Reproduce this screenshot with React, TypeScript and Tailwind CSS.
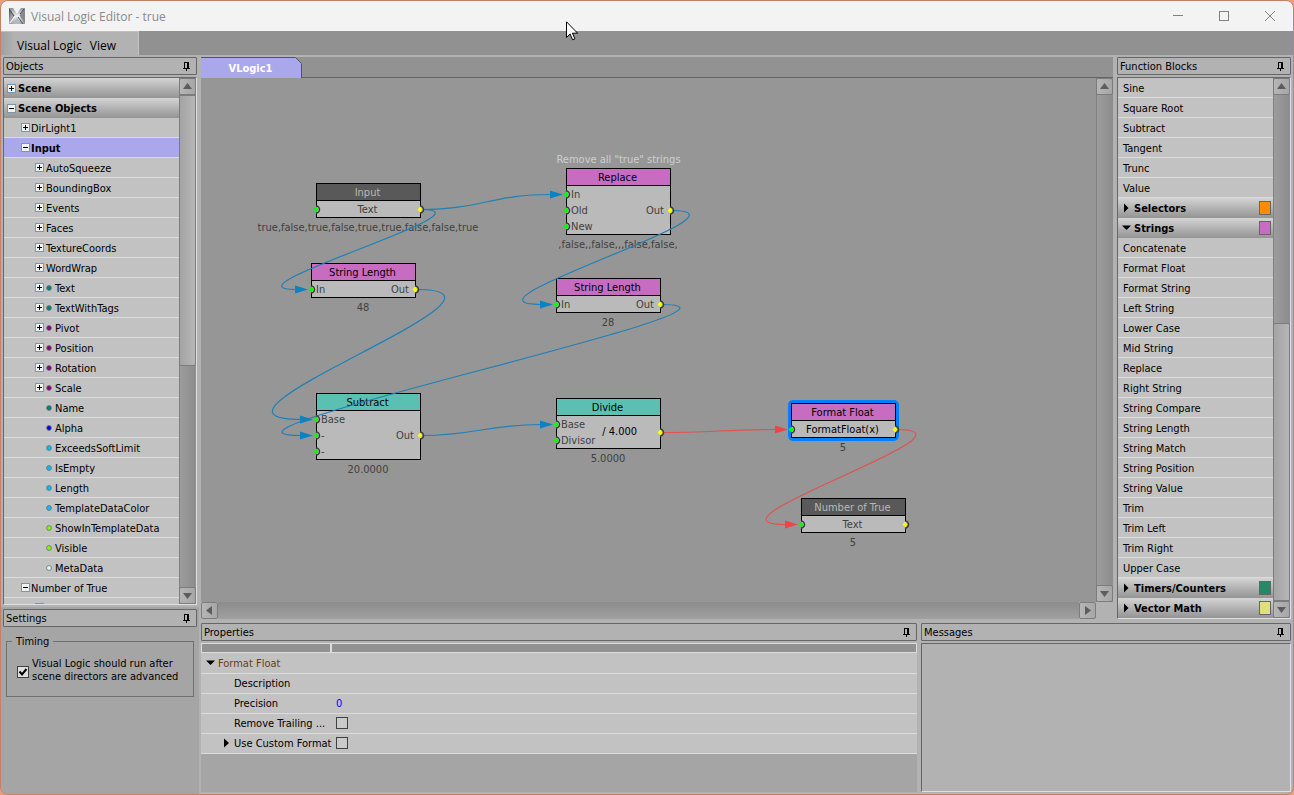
import { useState } from "react";
import type { ReactNode } from "react";

type TreeRow = {
  label: string;
  level: number;
  toggle?: "+" | "-";
  dot?: string;
};

const treeRows: TreeRow[] = [
  { label: "DirLight1", level: 1, toggle: "+" },
  { label: "Input", level: 1, toggle: "-" },
  { label: "AutoSqueeze", level: 2, toggle: "+" },
  { label: "BoundingBox", level: 2, toggle: "+" },
  { label: "Events", level: 2, toggle: "+" },
  { label: "Faces", level: 2, toggle: "+" },
  { label: "TextureCoords", level: 2, toggle: "+" },
  { label: "WordWrap", level: 2, toggle: "+" },
  { label: "Text", level: 2, toggle: "+", dot: "#008080" },
  { label: "TextWithTags", level: 2, toggle: "+", dot: "#008080" },
  { label: "Pivot", level: 2, toggle: "+", dot: "#800080" },
  { label: "Position", level: 2, toggle: "+", dot: "#800080" },
  { label: "Rotation", level: 2, toggle: "+", dot: "#800080" },
  { label: "Scale", level: 2, toggle: "+", dot: "#800080" },
  { label: "Name", level: 2, dot: "#008080" },
  { label: "Alpha", level: 2, dot: "#0000ff" },
  { label: "ExceedsSoftLimit", level: 2, dot: "#00bfff" },
  { label: "IsEmpty", level: 2, dot: "#00bfff" },
  { label: "Length", level: 2, dot: "#00bfff" },
  { label: "TemplateDataColor", level: 2, dot: "#00bfff" },
  { label: "ShowInTemplateData", level: 2, dot: "#7fff00" },
  { label: "Visible", level: 2, dot: "#7fff00" },
  { label: "MetaData", level: 2, dot: "#e0ffff" },
  { label: "Number of True", level: 1, toggle: "-" },
  { label: "", level: 2, toggle: "+" },
];

const mathBlocks = ["Sine", "Square Root", "Subtract", "Tangent", "Trunc", "Value"];

const stringBlocks = [
  "Concatenate",
  "Format Float",
  "Format String",
  "Left String",
  "Lower Case",
  "Mid String",
  "Replace",
  "Right String",
  "String Compare",
  "String Length",
  "String Match",
  "String Position",
  "String Value",
  "Trim",
  "Trim Left",
  "Trim Right",
  "Upper Case",
];

type GraphNode = {
  x: number;
  y: number;
  title: string;
  kind: "object" | "string" | "math";
  inputs: string[];
  output?: string;
  middle?: string;
  value: string;
  note?: string;
  selected?: boolean;
};

const nodes: GraphNode[] = [
  { x: 115, y: 105, title: "Input", kind: "object", inputs: [""], middle: "Text", value: "true,false,true,false,true,true,false,false,true" },
  { x: 365, y: 90, title: "Replace", kind: "string", inputs: ["In", "Old", "New"], output: "Out", value: ",false,,false,,,false,false,", note: 'Remove all "true" strings' },
  { x: 110, y: 185, title: "String Length", kind: "string", inputs: ["In"], output: "Out", value: "48" },
  { x: 355, y: 200, title: "String Length", kind: "string", inputs: ["In"], output: "Out", value: "28" },
  { x: 115, y: 315, title: "Subtract", kind: "math", inputs: ["Base", "-", "-"], output: "Out", value: "20.0000" },
  { x: 355, y: 320, title: "Divide", kind: "math", inputs: ["Base", "Divisor"], middle: "/ 4.000", value: "5.0000" },
  { x: 590, y: 325, title: "Format Float", kind: "string", inputs: [""], middle: "FormatFloat(x)", value: "5", selected: true },
  { x: 600, y: 420, title: "Number of True", kind: "object", inputs: [""], middle: "Text", value: "5" },
];

const headerStyles = {
  object: "bg-[#595959] text-[#b8b8b8]",
  string: "bg-[#c86cc2] text-black",
  math: "bg-[#5bbfb1] text-black",
};

// from, to (arrow tail) and how far the curve is pulled sideways at both ends
const wires = [
  { from: [220, 131], to: [350, 116], pull: 60, red: false },
  { from: [220, 131], to: [95, 211], pull: 80, red: false },
  { from: [215, 211], to: [100, 341], pull: 133, red: false },
  { from: [470, 132], to: [340, 226], pull: 97, red: false },
  { from: [460, 226], to: [100, 357], pull: 134, red: false },
  { from: [220, 357], to: [340, 346], pull: 55, red: false },
  { from: [460, 354], to: [575, 351], pull: 50, red: true },
  { from: [695, 351], to: [585, 446], pull: 99, red: true },
];

function Pin() {
  return (
    <svg className="block" width="7" height="9" viewBox="0 0 7 9" shapeRendering="crispEdges">
      <path d="M1 0h5v1H1zM1 0h1v6H1zM4 0h2v6H4zM0 6h7v1H0zM3 7h1v2H3z" fill="#000" />
    </svg>
  );
}

function PanelHeader({ title }: { title: string }) {
  return (
    <header className="flex h-[18px] shrink-0 items-center justify-between rounded-[1px] border border-[#666] bg-[#b2b2b2] pr-[6px] pl-[2px]">
      <h2>{title}</h2>
      <button aria-label={`Pin ${title}`}>
        <Pin />
      </button>
    </header>
  );
}

function ScrollButton({ dir }: { dir: "up" | "down" | "left" | "right" }) {
  const paths = {
    up: "M3 10L7.500 4L12 10z",
    down: "M3 5L7.500 11L12 5z",
    left: "M10 3L4 7.500L10 12z",
    right: "M5 3L11 7.500L5 12z",
  };
  return (
    <button
      aria-label={`Scroll ${dir}`}
      className="h-[17px] w-[17px] shrink-0 rounded-[2px] border border-[#7c7c7c] bg-linear-to-r from-[#b6b6b6] to-[#a6a6a6]"
    >
      <svg className="block" width="15" height="15" viewBox="0 0 15 15">
        <path d={paths[dir]} fill="#5c5c5c" />
      </svg>
    </button>
  );
}

function VerticalScroll({ children }: { children?: ReactNode }) {
  return (
    <div className="flex w-[17px] shrink-0 flex-col border-l border-[#808080] bg-linear-to-r from-[#9c9c9c] to-[#8c8c8c]">
      <div className="-ml-px flex min-h-0 flex-1 flex-col">
        <ScrollButton dir="up" />
        <div className="flex min-h-0 flex-1 flex-col">{children}</div>
        <ScrollButton dir="down" />
      </div>
    </div>
  );
}

function Toggle({ sign }: { sign: "+" | "-" }) {
  return (
    <button aria-label={sign === "+" ? "Expand" : "Collapse"} className="shrink-0">
      <svg className="block" width="9" height="9" viewBox="0 0 9 9" shapeRendering="crispEdges">
        <rect x="0.5" y="0.5" width="8" height="8" fill="#f1f1ee" stroke="#7b95ad" />
        <path d="M2 4h5v1H2z" fill="#000" />
        {sign === "+" && <path d="M4 2h1v5H4z" fill="#000" />}
      </svg>
    </button>
  );
}

function ObjectTree() {
  const [selected, setSelected] = useState("Input");
  return (
    <ul className="min-h-0 min-w-0 flex-1 overflow-hidden bg-[#c2c2c2]">
      {[
        { label: "Scene", toggle: "+" as const },
        { label: "Scene Objects", toggle: "-" as const },
      ].map((row) => (
        <li
          key={row.label}
          className="flex h-5 items-center gap-[2px] bg-linear-to-b from-[#d4d4d4] to-[#949494] pl-[3px] font-bold"
        >
          <Toggle sign={row.toggle} />
          {row.label}
        </li>
      ))}
      {treeRows.map((row, i) => (
        <li
          key={i}
          onClick={() => setSelected(row.label)}
          className={`flex h-5 items-center border-b border-[#dcdcdc] ${
            row.level === 1 ? "gap-px pl-[17px]" : "gap-[2px] pl-[31px]"
          } ${row.label === selected ? "bg-[#aaa8ea] font-bold" : ""}`}
        >
          {row.toggle ? <Toggle sign={row.toggle} /> : <span className="w-[9px]" />}
          {row.dot && (
            <svg width="7" height="7" viewBox="0 0 7 7">
              <circle cx="3" cy="4" r="2.400" fill={row.dot} stroke="#6b6b6b" strokeWidth="0.8" />
            </svg>
          )}
          <span className="pt-[2px]">{row.label}</span>
        </li>
      ))}
    </ul>
  );
}

function BlockRow({ label }: { label: string }) {
  return (
    <li className="border-b border-[#dcdcdc]">
      <button className="flex h-[19px] w-full items-center pt-[2px] pl-[5px]">{label}</button>
    </li>
  );
}

function BlockGroup({ label, color, open }: { label: string; color: string; open?: boolean }) {
  return (
    <li className="flex h-5 items-center bg-linear-to-b from-[#d4d4d4] to-[#949494] pr-[2px] pl-1 font-bold">
      <button className="flex flex-1 items-center gap-[2px]">
        <svg width="10" height="10" viewBox="0 0 10 10">
          <path d={open ? "M0 2.500h9L4.500 7z" : "M2 0.500v9L6.500 5z"} fill="#000" />
        </svg>
        {label}
      </button>
      <span className={`h-[14px] w-3 border border-[#666] ${color}`} />
    </li>
  );
}

function FunctionBlocks() {
  return (
    <section className="flex w-[174px] shrink-0 flex-col gap-[2px]">
      <PanelHeader title="Function Blocks" />
      <div className="flex min-h-0 flex-1 border border-t-[#666] border-r-[#e0e0e0] border-b-[#e0e0e0] border-l-[#666]">
        <ul className="min-h-0 flex-1 overflow-hidden bg-[#c2c2c2]">
          {mathBlocks.map((b) => (
            <BlockRow key={b} label={b} />
          ))}
          <BlockGroup label="Selectors" color="bg-[#ff8c00]" />
          <BlockGroup label="Strings" color="bg-[#c86cc2]" open />
          {stringBlocks.map((b) => (
            <BlockRow key={b} label={b} />
          ))}
          <BlockGroup label="Timers/Counters" color="bg-[#228a64]" />
          <BlockGroup label="Vector Math" color="bg-[#e0e07a]" />
        </ul>
        <VerticalScroll>
          <div className="flex-1" />
          <div className="h-[55%] rounded-t-[2px] border border-[#7c7c7c] bg-linear-to-r from-[#a4a4a4] to-[#b6b6b6]" />
        </VerticalScroll>
      </div>
    </section>
  );
}

function NodeCard({ node }: { node: GraphNode }) {
  return (
    <div className="absolute w-[105px] text-[#404040]" style={{ left: node.x, top: node.y }}>
      {node.note && (
        <p className="absolute bottom-full left-1/2 -translate-x-1/2 leading-4 whitespace-nowrap text-[#cfcfcf]">
          {node.note}
        </p>
      )}
      {node.selected && <div className="absolute -inset-[3px] rounded-[5px] bg-[#0080ff]" />}
      <div className={`relative border border-black bg-[#bababa] ${node.selected ? "text-black" : ""}`}>
        <h3 className={`h-[17px] border-b border-black pr-[2px] text-center leading-[18px] ${headerStyles[node.kind]}`}>
          {node.title}
        </h3>
        <div className="flex items-center pr-[6px] pl-1 leading-[18px]">
          <ul>
            {node.inputs.map((name, i) => (
              <li key={i} className="h-4">
                {name}
              </li>
            ))}
          </ul>
          {node.middle && (
            <span className={`h-4 ${node.kind === "math" ? "ml-[7px] h-[18px] text-black" : "flex-1 text-center"}`}>
              {node.middle}
            </span>
          )}
          {node.output && <span className="ml-auto h-4">{node.output}</span>}
        </div>
      </div>
      <p className="absolute top-full left-1/2 -translate-x-1/2 pr-px leading-5 whitespace-nowrap">{node.value}</p>
    </div>
  );
}

function Port({ x, y, color }: { x: number; y: number; color: string }) {
  return (
    <g>
      <path d={`M${x} ${y - 3}a3.200 3.200 0 0 1 0 7`} fill="none" stroke="#3c3c3c" strokeWidth="1.500" />
      <path
        d={`M${x - 2.5} ${y + 0.5}L${x + 0.5} ${y - 2.5}L${x + 2.5} ${y + 0.5}L${x + 0.5} ${y + 3.5}z`}
        fill={color}
      />
    </g>
  );
}

function Canvas() {
  return (
    <div className="relative min-w-0 flex-1 overflow-hidden bg-[#969696]">
      {nodes.map((node, i) => (
        <NodeCard key={i} node={node} />
      ))}
      <svg className="pointer-events-none absolute inset-0 h-full w-full">
        {wires.map(({ from: [x1, y1], to: [x2, y2], pull, red }, i) => (
          <g key={i}>
            <path
              d={`M${x1} ${y1 + 0.5}C${x1 + pull} ${y1 + 0.5} ${x2 - pull} ${y2 + 0.5} ${x2} ${y2 + 0.5}`}
              fill="none"
              stroke={red ? "#e05252" : "#1f80b6"}
              strokeWidth="1.200"
            />
            <path d={`M${x2 - 1} ${y2 - 3.5}l13 4l-13 4z`} fill={red ? "#f04444" : "#0a82c4"} />
          </g>
        ))}
        {nodes.map((node, i) => (
          <g key={i}>
            {node.inputs.map((_, row) => (
              <Port key={row} x={node.x} y={node.y + 26 + row * 16} color="#00ff00" />
            ))}
            <Port x={node.x + 104} y={node.y + 18 + node.inputs.length * 8} color="#ffff00" />
          </g>
        ))}
      </svg>
    </div>
  );
}

function PropertyRow({ label, arrow, children }: { label: string; arrow?: boolean; children?: ReactNode }) {
  return (
    <tr className="h-5 border-b border-[#dcdcdc] bg-[#c2c2c2]">
      <th scope="row" className="w-[134px] p-0 text-left font-normal">
        <span className="flex items-center pl-[21px]">
          <svg width="12" height="10" viewBox="0 0 12 10">
            {arrow && <path d="M2 0.500v9L7 5z" fill="#000" />}
          </svg>
          <label htmlFor={label}>{label}</label>
        </span>
      </th>
      <td className="p-0 pl-px">{children}</td>
    </tr>
  );
}

function Properties() {
  return (
    <section className="flex min-w-0 flex-1 flex-col gap-[2px]">
      <PanelHeader title="Properties" />
      <div className="flex-1 bg-[#a5a5a5]">
        <div className="flex h-[10px] border border-[#dcdcdc] bg-[#929292]">
          <div className="w-[130px] border-r-2 border-[#dcdcdc]" />
        </div>
        <table className="w-full border-collapse">
          <tbody>
            <tr className="h-5 border-b border-[#dcdcdc] bg-[#c2c2c2] text-[#6b3c12]">
              <th colSpan={2} scope="rowgroup" className="p-0 pt-px text-left font-normal">
                <span className="flex items-center gap-[3px] pl-[5px]">
                  <svg width="9" height="10" viewBox="0 0 9 10">
                    <path d="M0 2.500h9L4.500 7z" fill="#000" />
                  </svg>
                  Format Float
                </span>
              </th>
            </tr>
            <PropertyRow label="Description">
              <input id="Description" type="text" className="block h-4 w-full bg-transparent outline-none" />
            </PropertyRow>
            <PropertyRow label="Precision">
              <input
                id="Precision"
                type="text"
                defaultValue="0"
                className="block h-4 w-full bg-transparent text-[#0000ff] outline-none"
              />
            </PropertyRow>
            <PropertyRow label="Remove Trailing ...">
              <input
                id="Remove Trailing ..."
                type="checkbox"
                className="block h-3 w-3 appearance-none border border-[#404040] bg-[#cacaca]"
              />
            </PropertyRow>
            <PropertyRow label="Use Custom Format" arrow>
              <input
                id="Use Custom Format"
                type="checkbox"
                className="block h-3 w-3 appearance-none border border-[#404040] bg-[#cacaca]"
              />
            </PropertyRow>
          </tbody>
        </table>
      </div>
    </section>
  );
}

function TitleBar() {
  return (
    <div className="relative flex h-[30px] shrink-0 items-center bg-[#f3f3f3] text-[#8a8a8a]">
      <svg className="ml-2" width="16" height="16" viewBox="0 0 16 16">
        <defs>
          <linearGradient id="metal" x1="0" y1="0" x2="1" y2="1">
            <stop offset="0" stopColor="#3f4248" />
            <stop offset="0.5" stopColor="#a4a7ac" />
            <stop offset="1" stopColor="#55585e" />
          </linearGradient>
          <linearGradient id="arm" x1="0" y1="0" x2="0" y2="1">
            <stop offset="0" stopColor="#8a8d93" />
            <stop offset="0.5" stopColor="#f0f1f3" />
            <stop offset="1" stopColor="#9a9da3" />
          </linearGradient>
        </defs>
        <path d="M0 0h16v16H0z" fill="url(#arm)" />
        <path d="M0 0l5.500 7.500L0 16z" fill="url(#metal)" />
        <path d="M16 0l-5.500 7.500L16 16z" fill="#85888e" />
        <path d="M4 0h8L8 6z" fill="#f1f2f3" />
        <path d="M4 16h8L8 10z" fill="#b4b7bc" />
        <path d="M0 1l5 7M11 6l4-5M9 9l5 7" stroke="#4c4f55" strokeWidth="1" />
        <path d="M1 15l5-7" stroke="#fff" strokeWidth="1" />
      </svg>
      <h1 className="ml-[6px] font-['Open_Sans',sans-serif] text-[12px]">Visual Logic Editor - true</h1>
      <div className="ml-auto flex h-full text-[#808080]">
        <button aria-label="Minimize" className="flex w-[46px] items-center justify-center">
          <svg width="11" height="11" viewBox="0 0 11 11">
            <path d="M0 4.500h10" stroke="currentColor" />
          </svg>
        </button>
        <button aria-label="Maximize" className="flex w-[46px] items-center justify-center">
          <svg width="11" height="11" viewBox="0 0 11 11">
            <rect x="0.5" y="0.5" width="9" height="9" fill="none" stroke="currentColor" />
          </svg>
        </button>
        <button aria-label="Close" className="flex w-[46px] items-center justify-center">
          <svg width="11" height="11" viewBox="0 0 11 11">
            <path d="M0 0l10 10M10 0l-10 10" stroke="currentColor" />
          </svg>
        </button>
      </div>
      {/* mouse pointer */}
      <svg className="absolute top-5 left-[565px] z-10" width="13" height="20" viewBox="0 0 13 20">
        <path
          d="M0.500 0.800v15.700l3.600-3.500l2.500 5.800l2.300-1l-2.500-5.600h5.200z"
          fill="#fff"
          stroke="#000"
          strokeWidth="1"
        />
      </svg>
    </div>
  );
}

export default function App() {
  return (
    <div className="h-screen bg-[#e9a07a] font-['DejaVu_Sans_Condensed','Noto_Sans',sans-serif] text-[11px] leading-[13px] text-black">
      <div className="flex h-full flex-col overflow-hidden rounded-lg border border-[#c08464] bg-[#b2b2b2]">
        <TitleBar />
        <nav className="flex h-6 shrink-0 bg-[#919191] font-['Open_Sans',sans-serif] text-[12px]">
          <div className="flex items-center gap-2 border-t border-r border-t-[#c4bcbc] border-r-[#c8c0c0] bg-linear-to-r from-[#a0a0a0] to-[#b2b2b2] to-10% pt-1 pr-[22px] pl-4">
            <button>Visual Logic</button>
            <button>View</button>
          </div>
        </nav>

        <div className="flex min-h-0 flex-1 gap-[2px] pr-[2px]">
          <aside className="flex w-[198px] shrink-0 flex-col gap-[2px] pt-[2px]">
            <section className="flex min-h-0 flex-1 flex-col gap-[2px] px-[2px]">
              <PanelHeader title="Objects" />
              <div className="flex min-h-0 flex-1 border border-t-[#666] border-r-[#e0e0e0] border-b-[#e0e0e0] border-l-[#666]">
                <ObjectTree />
                <VerticalScroll>
                  <div className="h-[55%] rounded-b-[2px] border border-[#7c7c7c] bg-linear-to-r from-[#a4a4a4] to-[#b6b6b6]" />
                </VerticalScroll>
              </div>
            </section>
            <section className="h-[187px] shrink-0 bg-[#a5a5a5] px-[2px] pt-[2px]">
              <PanelHeader title="Settings" />
              <fieldset className="mx-[3px] mt-2 border border-[#707070] px-[10px] pt-[9px] pb-[13px]">
                <legend className="-ml-[5px] px-1">Timing</legend>
                <label className="flex items-center gap-[3px] whitespace-nowrap">
                  <span className="relative mt-1 h-3 w-3 shrink-0">
                    <input
                      type="checkbox"
                      defaultChecked
                      className="peer block h-3 w-3 appearance-none border border-[#404040] bg-[#e0e0e0]"
                    />
                    <svg
                      className="pointer-events-none absolute inset-0 hidden peer-checked:block"
                      width="12"
                      height="12"
                      viewBox="0 0 12 12"
                    >
                      <path d="M2.500 5.500l2.500 3L9.500 3" fill="none" stroke="#000" strokeWidth="2" />
                    </svg>
                  </span>
                  <span>
                    Visual Logic should run after
                    <br />
                    scene directors are advanced
                  </span>
                </label>
              </fieldset>
            </section>
          </aside>

          <main className="flex min-w-0 flex-1 flex-col gap-1 pt-[2px] pb-[2px]">
            <div className="flex min-h-0 flex-1 gap-1">
              <section className="flex min-w-0 flex-1 flex-col">
                <div className="flex h-[21px] shrink-0 border-b border-[#666] bg-[#929292]">
                  <button className="relative w-[101px] pt-[3px] pr-[2px] text-center font-bold text-white">
                    <svg className="absolute inset-0" width="101" height="21" viewBox="0 0 101 21">
                      <path d="M0 0.500h94.500L100.500 6.500V21H0z" fill="#aaa8ea" />
                      <path d="M0 0.500h94.500L100.500 6.500V21" fill="none" stroke="#555" />
                    </svg>
                    <span className="relative">VLogic1</span>
                  </button>
                </div>
                <div className="flex min-h-0 flex-1">
                  <Canvas />
                  <VerticalScroll />
                </div>
                <div className="flex h-[17px] shrink-0 pr-[17px]">
                  <ScrollButton dir="left" />
                  <div className="flex-1 bg-linear-to-b from-[#8c8c8c] to-[#a0a0a0]" />
                  <ScrollButton dir="right" />
                </div>
              </section>
              <FunctionBlocks />
            </div>
            <div className="flex h-[169px] shrink-0 gap-1">
              <Properties />
              <section className="flex w-[370px] shrink-0 flex-col gap-[2px]">
                <PanelHeader title="Messages" />
                <div className="flex-1 border border-t-[#666] border-r-[#e0e0e0] border-b-[#e0e0e0] border-l-[#666] bg-[#b2b2b2]" />
              </section>
            </div>
          </main>
        </div>
      </div>
    </div>
  );
}
